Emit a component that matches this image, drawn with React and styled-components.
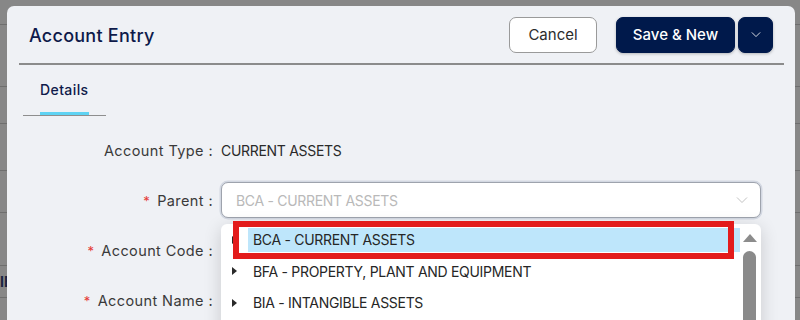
import React from "react";
import styled, { createGlobalStyle } from "styled-components";

const GlobalStyle = createGlobalStyle`
  html, body { margin: 0; padding: 0; }
  body {
    background: #878787;
    font-family: Inter, "Noto Sans", sans-serif;
    width: 800px;
    height: 320px;
    overflow: hidden;
  }
`;

const Backdrop = styled.div`
  position: relative;
  width: 800px;
  height: 320px;
  overflow: hidden;
  background: #878787;
`;

const UnderPage = styled.div`
  display: flex;
  flex-direction: column;
`;

const UnderRow = styled.div`
  height: ${(p) => p.$h}px;
  border-bottom: 1px solid #6e6e6e;
  box-sizing: border-box;
  color: #1a2340;
  font-weight: 700;
  font-size: 14px;
  display: flex;
  align-items: center;
`;

const Modal = styled.div`
  position: absolute;
  left: 7px;
  top: 6px;
  right: 5px;
  bottom: -20px;
  background: #eff1f5;
  border-radius: 7px 7px 0 0;
  display: flex;
  flex-direction: column;
`;

const Header = styled.div`
  height: 57px;
  display: flex;
  align-items: center;
  justify-content: space-between;
  padding: 0 22px;
  box-sizing: border-box;
`;

const Title = styled.h1`
  margin: 0;
  font-size: 18px;
  font-weight: 500;
  letter-spacing: 0.25px;
  color: #0e1a4a;
  padding-top: 2px;
`;

const Actions = styled.div`
  display: flex;
  align-items: center;
  gap: 3px;
`;

const Button = styled.button`
  height: 36px;
  box-sizing: border-box;
  border-radius: 7px;
  font-family: inherit;
  font-size: 15px;
  padding: 0;
  display: flex;
  align-items: center;
  justify-content: center;
  cursor: pointer;
  width: ${(p) => p.$w}px;
  ${(p) =>
    p.$primary
      ? `background: #00194b; color: #fff; border: 1px solid #00194b; font-weight: 500; box-shadow: 0 1px 3px rgba(0,0,0,0.25);`
      : `background: #fff; color: #2c2c2c; border: 1px solid #9a9a9a; font-weight: 400;`}
`;

const Spacer = styled.div`
  width: 13px;
`;

const Divider = styled.div`
  height: 2px;
  background: #8b8b8b;
  margin: 0 11px 0 12px;
`;

const Tabs = styled.div`
  margin-left: 16px;
  width: 83px;
  height: 51px;
  border-bottom: 1px solid #8e8e8e;
  display: flex;
  box-sizing: border-box;
`;

const Tab = styled.div`
  margin-left: 17px;
  height: 100%;
  display: flex;
  align-items: center;
  font-size: 14px;
  font-weight: 500;
  letter-spacing: 0.4px;
  color: #0e1a4a;
  border-bottom: 3px solid #5fd3f3;
  margin-bottom: -2px;
  box-sizing: border-box;
  padding-top: 1px;
`;

const Form = styled.div`
  display: grid;
  grid-template-columns: 206px 540px;
  column-gap: 8px;
  grid-auto-rows: 50px;
  margin-top: 9px;
  align-items: center;
`;

const Label = styled.div`
  text-align: right;
  font-size: 14.5px;
  letter-spacing: 0.4px;
  color: #3a3a3a;
  white-space: nowrap;
`;

const Req = styled.span`
  color: #e53935;
  margin-right: 7px;
  font-size: 13px;
`;

const Value = styled.div`
  font-size: 14px;
  letter-spacing: -0.3px;
  color: #2a2a2a;
`;

const SelectWrap = styled.div`
  position: relative;
`;

const Select = styled.div`
  height: 36px;
  box-sizing: border-box;
  background: #fff;
  border: 1px solid #9ea3ad;
  box-shadow: 0 0 0 1.5px #d3d8e2;
  border-radius: 7px;
  display: flex;
  align-items: center;
  justify-content: space-between;
  padding: 0 12px 0 14px;
  font-size: 14px;
  letter-spacing: -0.3px;
  color: #b9b9b9;
`;

const Panel = styled.div`
  position: absolute;
  top: 42px;
  left: 0;
  width: 540px;
  height: 140px;
  background: #fff;
  border-radius: 6px;
  box-shadow: 0 4px 18px rgba(0, 0, 0, 0.16);
  display: flex;
  z-index: 5;
`;

const List = styled.div`
  flex: 1;
  display: flex;
  flex-direction: column;
`;

const Item = styled.div`
  position: relative;
  height: 31.5px;
  display: flex;
  align-items: center;
  padding-left: 11px;
  font-size: 14px;
  letter-spacing: -0.3px;
  color: #262626;
`;

const Caret = styled.span`
  width: 0;
  height: 0;
  border-top: 4px solid transparent;
  border-bottom: 4px solid transparent;
  border-left: 5px solid #2a2a2a;
  margin-right: 11px;
`;

const ItemText = styled.span`
  height: 24px;
  display: flex;
  align-items: center;
  padding-left: 5px;
  flex: ${(p) => (p.$active ? 1 : "none")};
  background: ${(p) => (p.$active ? "#bee6fb" : "transparent")};
`;

const Annotation = styled.div`
  position: absolute;
  left: 12px;
  top: -3px;
  width: 501px;
  height: 38px;
  box-sizing: border-box;
  border: 6.5px solid #e31c1c;
  pointer-events: none;
`;

const Scroll = styled.div`
  width: 19px;
  display: flex;
  flex-direction: column;
  align-items: center;
  padding-top: 10px;
  padding-right: 2px;
  gap: 9px;
`;

const ScrollUp = styled.div`
  width: 0;
  height: 0;
  border-left: 7px solid transparent;
  border-right: 7px solid transparent;
  border-bottom: 8px solid #8c8c8c;
`;

const Thumb = styled.div`
  width: 13px;
  flex: 1;
  background: #8a8a8a;
  border-radius: 7px 7px 0 0;
`;

const Chevron = ({ color = "#c2c2c2", size = 12 }) => (
  <svg width={size} height={size / 2 + 2} viewBox="0 0 12 8" fill="none">
    <path d="M1 1.5 L6 6.5 L11 1.5" stroke={color} strokeWidth="1" />
  </svg>
);

export default function App() {
  const rows = [25, 62, 37, 47, 42, 53, 32, 40];
  return (
    <>
      <GlobalStyle />
      <Backdrop>
        <UnderPage>
          {rows.map((h, i) => (
            <UnderRow key={i} $h={h}>
              {i === 6 ? "IE" : ""}
            </UnderRow>
          ))}
        </UnderPage>
        <Modal>
          <Header>
            <Title>Account Entry</Title>
            <Actions>
              <Button $w={88}>Cancel</Button>
              <Spacer />
              <Button $primary $w={119}>Save &amp; New</Button>
              <Button $primary $w={35}>
                <Chevron color="#ffffff" size={10} />
              </Button>
            </Actions>
          </Header>
          <Divider />
          <Tabs>
            <Tab>Details</Tab>
          </Tabs>
          <Form>
            <Label>Account Type :</Label>
            <Value>CURRENT ASSETS</Value>
            <Label>
              <Req>*</Req>Parent :
            </Label>
            <SelectWrap>
              <Select>
                <span>BCA - CURRENT ASSETS</span>
                <Chevron />
              </Select>
              <Panel>
                <List>
                  <Item>
                    <Caret />
                    <ItemText $active>BCA - CURRENT ASSETS</ItemText>
                    <Annotation />
                  </Item>
                  <Item>
                    <Caret />
                    <ItemText>BFA - PROPERTY, PLANT AND EQUIPMENT</ItemText>
                  </Item>
                  <Item>
                    <Caret />
                    <ItemText>BIA - INTANGIBLE ASSETS</ItemText>
                  </Item>
                </List>
                <Scroll>
                  <ScrollUp />
                  <Thumb />
                </Scroll>
              </Panel>
            </SelectWrap>
            <Label>
              <Req>*</Req>Account Code :
            </Label>
            <div />
            <Label>
              <Req>*</Req>Account Name :
            </Label>
            <div />
          </Form>
        </Modal>
      </Backdrop>
    </>
  );
}
